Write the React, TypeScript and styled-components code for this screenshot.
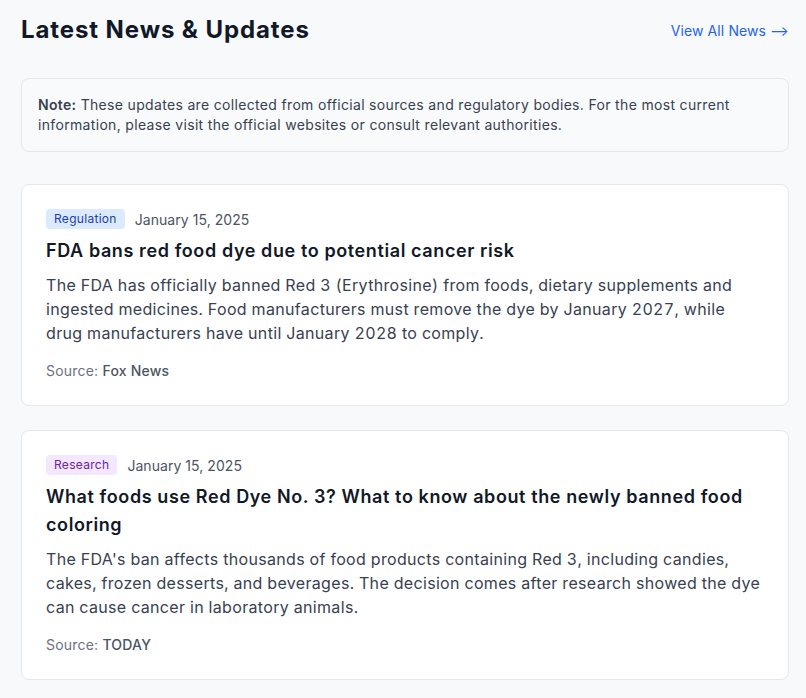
import styled, { createGlobalStyle } from 'styled-components'

const GlobalStyle = createGlobalStyle`
  * { box-sizing: border-box; }
  body {
    margin: 0;
    background: #f8f9fb;
    font-family: Inter, "Noto Sans", sans-serif;
    color: #1f2937;
  }
`

interface INewsItem {
  category: string
  tone: 'blue' | 'purple'
  date: string
  title: string
  summary: string
  source: string
}

const news: INewsItem[] = [
  {
    category: 'Regulation',
    tone: 'blue',
    date: 'January 15, 2025',
    title: 'FDA bans red food dye due to potential cancer risk',
    summary:
      'The FDA has officially banned Red 3 (Erythrosine) from foods, dietary supplements and ingested medicines. Food manufacturers must remove the dye by January 2027, while drug manufacturers have until January 2028 to comply.',
    source: 'Fox News',
  },
  {
    category: 'Research',
    tone: 'purple',
    date: 'January 15, 2025',
    title: 'What foods use Red Dye No. 3? What to know about the newly banned food coloring',
    summary:
      "The FDA's ban affects thousands of food products containing Red 3, including candies, cakes, frozen desserts, and beverages. The decision comes after research showed the dye can cause cancer in laboratory animals.",
    source: 'TODAY',
  },
]

const App = () => {
  return <Page>
    <GlobalStyle />
    <Header>
      <h2>Latest News &amp; Updates</h2>
      <a href="#">View All News ⟶</a>
    </Header>
    <Note>
      <strong>Note:</strong> These updates are collected from official sources and regulatory bodies. For the most current information, please visit the official websites or consult relevant authorities.
    </Note>
    <List>
      {news.map((n) =>
        <Card key={n.title}>
          <Meta>
            <Badge $tone={n.tone}>{n.category}</Badge>
            <span>{n.date}</span>
          </Meta>
          <Title>{n.title}</Title>
          <Summary>{n.summary}</Summary>
          <Source>Source: <b>{n.source}</b></Source>
        </Card>
      )}
    </List>
  </Page>
}

const Page = styled.div`
  padding: 12px 17px 18px 21px;
`

const Header = styled.div`
  display: flex;
  align-items: center;
  justify-content: space-between;
  margin-bottom: 30px;
  h2 {
    margin: 0;
    font-size: 24px;
    line-height: 36px;
    font-weight: 700;
    letter-spacing: 0.9px;
    color: #111827;
  }
  a {
    font-size: 14px;
    letter-spacing: 0.1px;
    color: #2563eb;
    text-decoration: none;
  }
`

const Note = styled.div`
  background: #f9fafb;
  border: 1px solid #e5e7eb;
  border-radius: 8px;
  padding: 16px;
  font-size: 14px;
  line-height: 20px;
  letter-spacing: 0.33px;
  color: #374151;
  margin-bottom: 32px;
  strong {
    font-weight: 600;
  }
`

const List = styled.div`
  display: flex;
  flex-direction: column;
  gap: 24px;
`

const Card = styled.div`
  background: #fff;
  border: 1px solid #e5e7eb;
  border-radius: 8px;
  padding: 24px;
`

const Meta = styled.div`
  display: flex;
  align-items: center;
  gap: 10px;
  font-size: 14px;
  letter-spacing: 0.05px;
  color: #4b5563;
`

const tones = {
  blue: { bg: '#dbeafe', fg: '#1e40af' },
  purple: { bg: '#f3e8ff', fg: '#6b21a8' },
}

const Badge = styled.span<{ $tone: 'blue' | 'purple' }>`
  background: ${({ $tone }) => tones[$tone].bg};
  color: ${({ $tone }) => tones[$tone].fg};
  font-size: 12px;
  line-height: 20px;
  letter-spacing: 0.3px;
  padding: 0 8px;
  border-radius: 4px;
`

const Title = styled.h3`
  margin: 8px 0 8px;
  font-size: 18px;
  line-height: 28px;
  font-weight: 600;
  letter-spacing: 0.6px;
  color: #111827;
`

const Summary = styled.p`
  margin: 0 0 16px;
  font-size: 16px;
  line-height: 24px;
  letter-spacing: 0.33px;
  font-variant-numeric: tabular-nums;
  color: #374151;
`

const Source = styled.div`
  font-size: 14px;
  line-height: 20px;
  letter-spacing: 0.2px;
  color: #6b7280;
  b {
    font-weight: 500;
    color: #4b5563;
  }
`

export default App
